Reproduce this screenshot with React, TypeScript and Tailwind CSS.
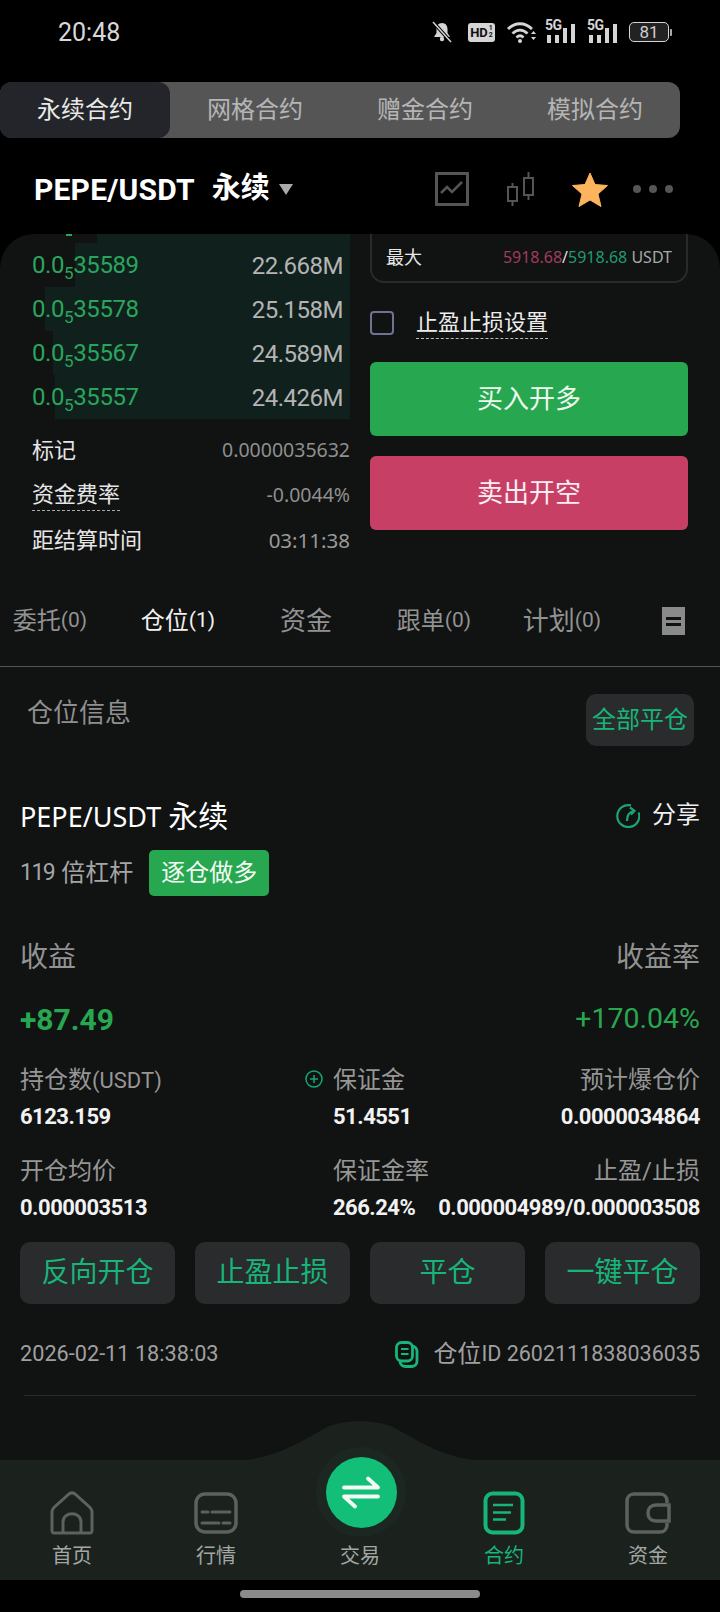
import React from "react";

const FONT = "font-['Roboto','Noto_Sans_CJK_SC',sans-serif]";
const NOTO = "font-['Noto_Sans','Noto_Sans_CJK_SC',sans-serif]";

function Signal() {
  return (
    <div className="relative w-[31px] h-[22px]">
      <span className="absolute left-0 -top-[3px] text-[14px] leading-[14px] font-bold tracking-[-0.5px] text-[#d5d5d5] font-['Roboto',sans-serif]">5G</span>
      <svg width="31" height="22" viewBox="0 0 31 22" className="absolute left-0 top-0">
        <rect x="2" y="14" width="4" height="8" fill="#d5d5d5" />
        <rect x="10" y="14" width="4" height="8" fill="#d5d5d5" />
        <rect x="18" y="7" width="4" height="15" fill="#d5d5d5" />
        <rect x="26" y="3" width="4" height="19" fill="#d5d5d5" />
      </svg>
    </div>
  );
}

function StatusBar() {
  return (
    <div className="h-[82px] flex items-start justify-between pl-[58px] pr-[48px] pt-[21px]">
      <span className="text-[25px] leading-[24px] text-[#d8d8d8] font-['Roboto',sans-serif]">20:48</span>
      <div className="flex items-center h-[22px]">
        <svg width="20" height="22" viewBox="0 0 20 22" className="mr-[16px]">
          <path d="M10 2c-3.600 0-5.500 2.800-5.500 6v4L2 16h16l-2.500-4V8C15.500 4.800 13.600 2 10 2z" fill="#d5d5d5" />
          <circle cx="10" cy="18" r="2.200" fill="#d5d5d5" />
          <path d="M1 1l18 20" stroke="#000" strokeWidth="3.500" />
          <path d="M1 1l18 20" stroke="#d5d5d5" strokeWidth="1.500" />
        </svg>
        <div className="w-[27px] h-[19px] bg-[#d5d5d5] rounded-[3px] flex items-center justify-center mr-[12px]">
          <span className="text-[13px] leading-[13px] font-bold text-[#111] font-['Roboto',sans-serif]">HD</span>
          <span className="flex flex-col text-[7px] leading-[7px] font-bold text-[#111] font-['Roboto',sans-serif] ml-[1px]"><span>1</span><span>2</span></span>
        </div>
        <svg width="30" height="22" viewBox="0 0 30 22" className="mr-[8px]">
          <path d="M1 8c7-7 17-7 24 0" fill="none" stroke="#d5d5d5" strokeWidth="2.800" />
          <path d="M5.500 12.500c4.500-4.500 10.500-4.500 15 0" fill="none" stroke="#d5d5d5" strokeWidth="2.800" />
          <path d="M9.500 16.500c2.500-2.500 4.500-2.500 7 0" fill="none" stroke="#d5d5d5" strokeWidth="2.800" />
          <circle cx="13" cy="20" r="2" fill="#d5d5d5" />
          <path d="M24 13l2.500-3 2.500 3zM24 16l2.500 3 2.500-3z" fill="#d5d5d5" />
        </svg>
        <div className="mr-[11px]"><Signal /></div>
        <div className="mr-[11px]"><Signal /></div>
        <div className="flex items-center">
          <div className="w-[40px] h-[20px] rounded-[5px] border-[1.5px] border-[#d5d5d5] flex items-center justify-center bg-[#222]">
            <span className="text-[17px] leading-[17px] text-[#cfcfcf] font-['Roboto',sans-serif]">81</span>
          </div>
          <div className="w-[2px] h-[7px] bg-[#aaa] ml-[1px] rounded-r-[1px]" />
        </div>
      </div>
    </div>
  );
}

function ModeTabs() {
  const items = ["永续合约", "网格合约", "赠金合约", "模拟合约"];
  return (
    <div className="w-[680px] h-[56px] bg-[#555556] rounded-[12px] flex">
      {items.map((t, i) => (
        <div
          key={t}
          className={
            i === 0
              ? "w-[170px] rounded-[12px] bg-[#23252a] text-[#e8e8e8] flex items-center justify-center text-[24px]"
              : "w-[170px] text-[#b5b5b5] flex items-center justify-center text-[24px]"
          }
        >
          {t}
        </div>
      ))}
    </div>
  );
}

function TitleRow() {
  return (
    <div className="h-[96px] pt-[6px] flex items-center pl-[34px] pr-[47px] justify-between">
      <div className="flex items-center">
        <span className="text-[30px] font-bold text-white tracking-[0.2px]">PEPE/USDT</span>
        <span className="text-[29px] font-bold text-white ml-[17px]">永续</span>
        <svg width="14" height="11" viewBox="0 0 14 11" className="ml-[9px] mt-[1px]"><path d="M0 0h14L7 11z" fill="#aaaaaa" /></svg>
      </div>
      <div className="flex items-center">
        <svg width="34" height="34" viewBox="0 0 34 34" className="mr-[38px]">
          <rect x="1.500" y="1.500" width="31" height="31" fill="none" stroke="#555" strokeWidth="3" />
          <path d="M6 21l6-6 5 5 10-10" fill="none" stroke="#555" strokeWidth="2.500" />
        </svg>
        <svg width="28" height="34" viewBox="0 0 28 34" className="mr-[37px]">
          <g fill="none" stroke="#555" strokeWidth="2">
            <rect x="1" y="15" width="9" height="14" />
            <path d="M5.500 11v4M5.500 29v5" />
            <rect x="17" y="6" width="9" height="17" />
            <path d="M21.500 0v6M21.500 23v5" />
          </g>
        </svg>
        <svg width="36" height="35" viewBox="0 0 36 35" className="mr-[25px]">
          <path d="M18 1l5 11.500 12.500 1-9.500 8.500 3 12.500L18 28l-11 6.500 3-12.500L.5 13.500l12.500-1z" fill="#fdb45c" stroke="#fdb45c" strokeLinejoin="round" />
        </svg>
        <div className="flex gap-[8px]">
          <div className="w-[8px] h-[8px] rounded-full bg-[#555]" />
          <div className="w-[8px] h-[8px] rounded-full bg-[#555]" />
          <div className="w-[8px] h-[8px] rounded-full bg-[#555]" />
        </div>
      </div>
    </div>
  );
}

const ROWS = [
  { p: "35589", q: "22.668M", left: 75 },
  { p: "35578", q: "25.158M", left: 45 },
  { p: "35567", q: "24.589M", left: 53 },
  { p: "35557", q: "24.426M", left: 55 },
];

function OrderBook() {
  return (
    <div className="w-[350px]">
      <div className="h-[9px] relative">
        <div className="absolute top-0 bottom-0 right-0 left-[97px] bg-[#10201d]" />
        <div className="absolute top-0 left-[66px] w-[6px] h-[2px] bg-[#2aa65c]" />
      </div>
      {ROWS.map((r) => (
        <div key={r.p} className="relative h-[44px] flex items-center justify-between pl-[32px] pr-[7px]">
          <div className="absolute top-0 bottom-0 right-0 bg-[#10201d]" style={{ left: r.left }} />
          <span className="relative top-[1px] text-[24px] leading-[30px] text-[#2aa65c] tracking-[-0.4px]">
            0.0<span className="text-[17px] relative top-[6px]">5</span>{r.p}
          </span>
          <span className="relative top-[1px] text-[24px] leading-[30px] text-[#b4b4b4] tracking-[-0.5px]">{r.q}</span>
        </div>
      ))}
      <div className="pl-[32px] pt-[9px]">
        <div className="h-[44px] flex items-center justify-between">
          <span className="text-[22px] text-[#e6e6e6]">标记</span>
          <span className={`${NOTO} text-[19.500px] text-[#8f8f8f]`}>0.0000035632</span>
        </div>
        <div className="h-[44px] mt-[1px] flex items-center justify-between">
          <span className="text-[22px] leading-[30px] text-[#e6e6e6] border-b-[1.5px] border-dashed border-[#aaa]">资金费率</span>
          <span className={`${NOTO} text-[19.500px] text-[#8f8f8f]`}>-0.0044%</span>
        </div>
        <div className="h-[44px] mt-[1px] flex items-center justify-between">
          <span className="text-[22px] text-[#e6e6e6]">距结算时间</span>
          <span className={`${NOTO} text-[20.500px] text-[#9a9a9a]`}>03:11:38</span>
        </div>
      </div>
    </div>
  );
}

function OrderForm() {
  return (
    <div className="ml-[20px] w-[318px]">
      <div className="h-[50px] -mt-[1px] border-2 border-t-0 border-[#2a2a2c] rounded-b-[14px] flex items-center justify-between px-[14px]">
        <span className="text-[18px] text-[#e8e8e8]">最大</span>
        <span className={`${NOTO} text-[16px] text-[#a8a8a8]`}>
          <span className="text-[#a03c5c]">5918.68</span>
          <span className="text-[#ddd]">/</span>
          <span className="text-[#1f9a6e]">5918.68</span> USDT
        </span>
      </div>
      <div className="flex items-center h-[30px] mt-[25px]">
        <div className="w-[24px] h-[24px] rounded-[4px] border-2 border-[#6f7391]" />
        <span className="ml-[22px] text-[22px] leading-[30px] text-[#ededed] border-b-[1.5px] border-dashed border-[#bbb]">止盈止损设置</span>
      </div>
      <div className="h-[74px] mt-[24px] rounded-[6px] bg-[#27a850] flex items-center justify-center text-[26px] text-[#eefaf0]">买入开多</div>
      <div className="h-[74px] mt-[20px] rounded-[6px] bg-[#c83f66] flex items-center justify-center text-[26px] text-[#fbeef2]">卖出开空</div>
    </div>
  );
}

function PositionTabs() {
  const items = [
    { a: "委托", b: "(0)", big: false },
    { a: "仓位", b: "(1)", big: false },
    { a: "资金", b: "", big: true },
    { a: "跟单", b: "(0)", big: false },
    { a: "计划", b: "(0)", big: true },
  ];
  return (
    <div className="h-[77px] border-b border-[#555] flex items-start -ml-[14px] pt-[11px]">
      {items.map((t, i) => (
        <div key={t.a} className={i === 1 ? "w-[128px] shrink-0 h-[40px] flex items-center justify-center text-[#f0f0f0]" : "w-[128px] shrink-0 h-[40px] flex items-center justify-center text-[#929292]"}>
          <span className={t.big ? "text-[26px]" : "text-[24px]"}>{t.a}</span>
          <span className="text-[21px]">{t.b}</span>
        </div>
      ))}
      <div className="w-[112px] shrink-0 h-[40px] flex items-center justify-center pr-[18px]">
        <div className="w-[23px] h-[28px] bg-[#8a8a8a] flex flex-col items-center justify-center gap-[3px]">
          <div className="w-[15px] h-[3px] bg-[#111]" />
          <div className="w-[15px] h-[3px] bg-[#111]" />
        </div>
      </div>
    </div>
  );
}

function Cell({ label, value, right }: { label: React.ReactNode; value: string; right?: boolean }) {
  return (
    <div className={right ? "text-right" : ""}>
      <div className="h-[30px] leading-[30px] text-[24px] text-[#969696] whitespace-nowrap">{label}</div>
      <div className="h-[26px] leading-[26px] mt-[9px] text-[22px] font-bold tracking-[-0.5px] text-[#f2f2f2] whitespace-nowrap">{value}</div>
    </div>
  );
}

function ActionButton({ t }: { t: string }) {
  return (
    <div className="h-[62px] rounded-[10px] bg-[#2a2b2c] flex items-center justify-center text-[28px] text-[#17b57a]">{t}</div>
  );
}

function Position() {
  return (
    <div className="px-[20px]">
      <div className="flex items-start justify-between pl-[7px] pr-[6px] pt-[27px]">
        <span className="text-[26px] leading-[38px] text-[#8f8f8f]">仓位信息</span>
        <div className="w-[108px] h-[52px] rounded-[10px] bg-[#2a2b2c] flex items-center justify-center text-[24px] text-[#17b57a]">全部平仓</div>
      </div>
      <div className="h-[40px] mt-[49px] flex items-center justify-between">
        <span className={`${NOTO} text-[27px] text-white`}>PEPE/USDT <span className="text-[30px]">永续</span></span>
        <div className="flex items-center">
          <svg width="24" height="26" viewBox="0 0 24 26" className="mr-[12px]">
            <path d="M15 3.400A11 11 0 1 0 22.700 10.500" fill="none" stroke="#17a674" strokeWidth="2.200" />
            <path d="M11 19C11 14 13 10 18 9M14 5.500L18.500 8.800 15 12.500" fill="none" stroke="#17a674" strokeWidth="2.200" />
          </svg>
          <span className="text-[24px] text-[#f0f0f0]">分享</span>
        </div>
      </div>
      <div className="flex items-center mt-[15px] h-[46px]">
        <span className="text-[23px] tracking-[-1.5px] text-[#a5a5a5]">119</span>
        <span className="text-[24px] ml-[7px] text-[#a5a5a5]">倍杠杆</span>
        <div className="ml-[16px] w-[120px] h-[46px] rounded-[5px] bg-[#27a850] flex items-center justify-center text-[24px] text-[#f3fbf4]">逐仓做多</div>
      </div>
      <div className="h-[40px] mt-[42px] flex items-center justify-between text-[28px] text-[#929292]">
        <span>收益</span>
        <span>收益率</span>
      </div>
      <div className="h-[40px] mt-[21px] flex items-center justify-between text-[#27a850]">
        <span className="text-[30px] font-bold">+87.49</span>
        <span className="text-[28.500px]">+170.04%</span>
      </div>
      <div className="flex justify-between mt-[26px] relative">
        <div className="w-[313px]"><Cell label={<>持仓数<span className="text-[22px]">(USDT)</span></>} value="6123.159" /></div>
        <div className="absolute left-[285px] top-[5px]">
          <svg width="18" height="18" viewBox="0 0 18 18">
            <circle cx="9" cy="9" r="8" fill="none" stroke="#17a674" strokeWidth="1.500" />
            <path d="M5 9h8M9 5v8" stroke="#17a674" strokeWidth="1.500" />
          </svg>
        </div>
        <div className="w-[150px]"><Cell label="保证金" value="51.4551" /></div>
        <div className="flex-1"><Cell right label="预计爆仓价" value="0.0000034864" /></div>
      </div>
      <div className="flex justify-between mt-[26px]">
        <div className="w-[313px]"><Cell label="开仓均价" value="0.000003513" /></div>
        <div className="w-[100px]"><Cell label="保证金率" value="266.24%" /></div>
        <div className="flex-1"><Cell right label="止盈/止损" value="0.000004989/0.000003508" /></div>
      </div>
      <div className="grid grid-cols-4 gap-[20px] mt-[21px]">
        <ActionButton t="反向开仓" />
        <ActionButton t="止盈止损" />
        <ActionButton t="平仓" />
        <ActionButton t="一键平仓" />
      </div>
      <div className="h-[30px] mt-[35px] flex items-center justify-between">
        <span className="text-[21.700px] text-[#a0a0a0]">2026-02-11 18:38:03</span>
        <div className="flex items-center">
          <svg width="24" height="27" viewBox="0 0 24 27" className="mr-[14px]">
            <rect x="5" y="5" width="17" height="20.500" rx="5.500" fill="none" stroke="#17b57a" strokeWidth="2.800" />
            <rect x="1.500" y="1.500" width="16" height="18.500" rx="5" fill="#111212" stroke="#17b57a" strokeWidth="2.800" />
            <path d="M6 8h7.500M6 13h7.500" stroke="#17b57a" strokeWidth="2.200" />
          </svg>
          <span className="text-[24px] text-[#a0a0a0]">仓位</span>
          <span className="text-[21.500px] text-[#a0a0a0]">ID 2602111838036035</span>
        </div>
      </div>
      <div className="h-px bg-[#2a2a2c] mt-[26px] mx-[4px]" />
    </div>
  );
}

function NavItem({ label, active, children }: { label: string; active?: boolean; children?: React.ReactNode }) {
  return (
    <div className="w-[144px] flex flex-col items-center">
      <div className="h-[44px] flex items-center justify-center">{children}</div>
      <span className={active ? "mt-[8px] h-[26px] leading-[26px] text-[20px] text-[#17b57a]" : "mt-[8px] h-[26px] leading-[26px] text-[20px] text-[#a3a7a4]"}>{label}</span>
    </div>
  );
}

function BottomNav() {
  const s = "#5b635e";
  return (
    <div className="relative h-[120px] bg-[#1b211d] pt-[31px]">
      <svg width="720" height="42" viewBox="0 0 720 42" className="absolute left-0 -top-[41px]">
        <path d="M235 42C275 40 300 23 325 9C342 0 378 0 395 9C420 23 445 40 485 42z" fill="#1b211d" />
      </svg>
      <div className="absolute left-[316px] -top-[13px] w-[90px] h-[90px] rounded-full bg-[#1b2720] flex items-center justify-center">
        <div className="w-[71px] h-[71px] rounded-full bg-[#12be78] flex items-center justify-center">
          <svg width="38" height="34" viewBox="0 0 38 34">
            <path d="M2 12.500h34L26 3.500" fill="none" stroke="#f2fbf6" strokeWidth="3.800" strokeLinecap="round" strokeLinejoin="round" />
            <path d="M36 21.500H2l11 10" fill="none" stroke="#f2fbf6" strokeWidth="3.800" strokeLinecap="round" strokeLinejoin="round" />
          </svg>
        </div>
      </div>
      <div className="flex">
        <NavItem label="首页">
          <svg width="44" height="44" viewBox="0 0 44 44">
            <path d="M2 40V21c0-2 1-3 2-4.500L19 3c2-1.500 4-1.500 6 0l15 13.500c1 1.500 2 2.500 2 4.500v19c0 1-1 2-2 2H4c-1 0-2-1-2-2z" fill="none" stroke={s} strokeWidth="3" />
            <path d="M13 41V31c0-11 18-11 18 0v10" fill="none" stroke={s} strokeWidth="3" />
          </svg>
        </NavItem>
        <NavItem label="行情">
          <svg width="44" height="42" viewBox="0 0 44 42">
            <rect x="2" y="2" width="40" height="38" rx="9" fill="none" stroke={s} strokeWidth="3.500" />
            <path d="M8 20h6M18 20h18M8 31h17M29 31h7" stroke={s} strokeWidth="3" strokeLinecap="round" />
          </svg>
        </NavItem>
        <NavItem label="交易" />
        <NavItem label="合约" active>
          <svg width="42" height="44" viewBox="0 0 42 44">
            <rect x="2.500" y="2.500" width="37" height="39" rx="7" fill="none" stroke="#17b57a" strokeWidth="4" />
            <path d="M10 14h20M10 21.500h18M10 28.500h13" stroke="#17b57a" strokeWidth="2.600" />
          </svg>
        </NavItem>
        <NavItem label="资金">
          <svg width="46" height="42" viewBox="0 0 46 42">
            <path d="M42 11V9c0-4-3-7-7-7H9C5 2 2 5 2 9v24c0 4 3 7 7 7h26c4 0 7-3 7-7v-2" fill="none" stroke={s} strokeWidth="3.500" />
            <path d="M44 13H31c-5 0-8 3-8 8s3 8 8 8h13z" fill="none" stroke={s} strokeWidth="3.500" />
          </svg>
        </NavItem>
      </div>
    </div>
  );
}

export default function App() {
  return (
    <div className={`${FONT} w-[720px] h-[1612px] bg-black flex flex-col overflow-hidden`}>
      <StatusBar />
      <ModeTabs />
      <TitleRow />
      <div className="h-[1226px] bg-[#111212] rounded-t-[34px] overflow-hidden">
        <div className="h-[356px] flex items-start">
          <OrderBook />
          <OrderForm />
        </div>
        <PositionTabs />
        <Position />
      </div>
      <BottomNav />
      <div className="flex-1 flex justify-center pt-[10px]">
        <div className="w-[240px] h-[8px] rounded-full bg-[#8a8a8a]" />
      </div>
    </div>
  );
}
